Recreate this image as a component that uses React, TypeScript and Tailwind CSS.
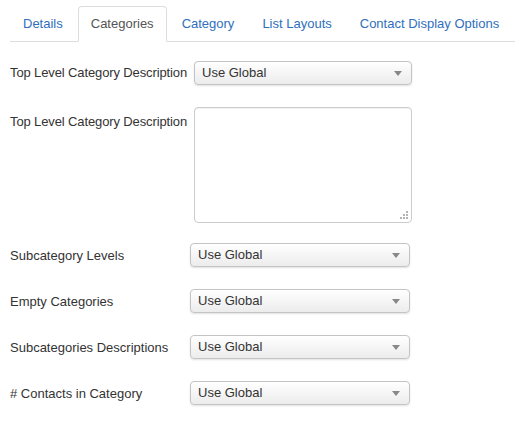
import React from "react";

const tabs = ["Details", "Categories", "Category", "List Layouts", "Contact Display Options"];

function FakeSelect({ className = "" }: { className?: string }) {
  return (
    <div
      className={`flex items-center justify-between h-[24px] rounded-[4px] border border-[#c4c4c4] bg-gradient-to-b from-white to-[#ececec] shadow-[0_1px_2px_rgba(0,0,0,0.12)] pl-[7px] pr-[9px] text-[13px] text-[#333] ${className}`}
    >
      <span>Use Global</span>
      <svg width="8" height="5" viewBox="0 0 8 5">
        <path d="M0 0 L8 0 L4 5 Z" fill="#888" />
      </svg>
    </div>
  );
}

export default function App() {
  const rows = ["Subcategory Levels", "Empty Categories", "Subcategories Descriptions", "# Contacts in Category"];

  return (
    <div
      className="w-[516px] h-[422px] bg-white pl-[10px] pr-[1px] pt-[6px] text-[13px] text-[#333]"
      style={{ fontFamily: '"Liberation Sans", Arial, sans-serif' }}
    >
      <ul className="flex border-b border-[#ddd]">
        {tabs.map((t, i) => (
          <li key={t} className="mr-[2px] -mb-px">
            <span
              className={
                i === 1
                  ? "block px-3 py-2 leading-[18px] rounded-t-[4px] border border-[#ddd] border-b-white bg-white text-[#555]"
                  : "block px-3 py-2 leading-[18px] border border-transparent text-[#2f6fbd]"
              }
            >
              {t}
            </span>
          </li>
        ))}
      </ul>

      <div className="mt-[19px]">
        <div className="flex items-center">
          <span className="w-[184px] whitespace-nowrap tracking-[-0.12px]">Top Level Category Description</span>
          <FakeSelect className="w-[218px]" />
        </div>

        <div className="flex items-start mt-[22px]">
          <span className="w-[184px] whitespace-nowrap tracking-[-0.12px] pt-[5px]">Top Level Category Description</span>
          <div className="relative w-[218px] h-[116px] rounded-[4px] border border-[#ccc] shadow-[inset_0_1px_1px_rgba(0,0,0,0.06)]">
            <svg className="absolute right-[3px] bottom-[3px]" width="8" height="8" viewBox="0 0 8 8">
              <rect x="6" y="0" width="2" height="2" fill="#b5b5b5" />
              <rect x="3" y="3" width="2" height="2" fill="#b5b5b5" />
              <rect x="6" y="3" width="2" height="2" fill="#b5b5b5" />
              <rect x="0" y="6" width="2" height="2" fill="#b5b5b5" />
              <rect x="3" y="6" width="2" height="2" fill="#b5b5b5" />
              <rect x="6" y="6" width="2" height="2" fill="#b5b5b5" />
            </svg>
          </div>
        </div>

        <div className="mt-[20px] flex flex-col gap-[22px]">
          {rows.map((r) => (
            <div key={r} className="flex items-center">
              <span className="w-[180px] whitespace-nowrap pt-[2px]">{r}</span>
              <FakeSelect className="w-[220px]" />
            </div>
          ))}
        </div>
      </div>
    </div>
  );
}
